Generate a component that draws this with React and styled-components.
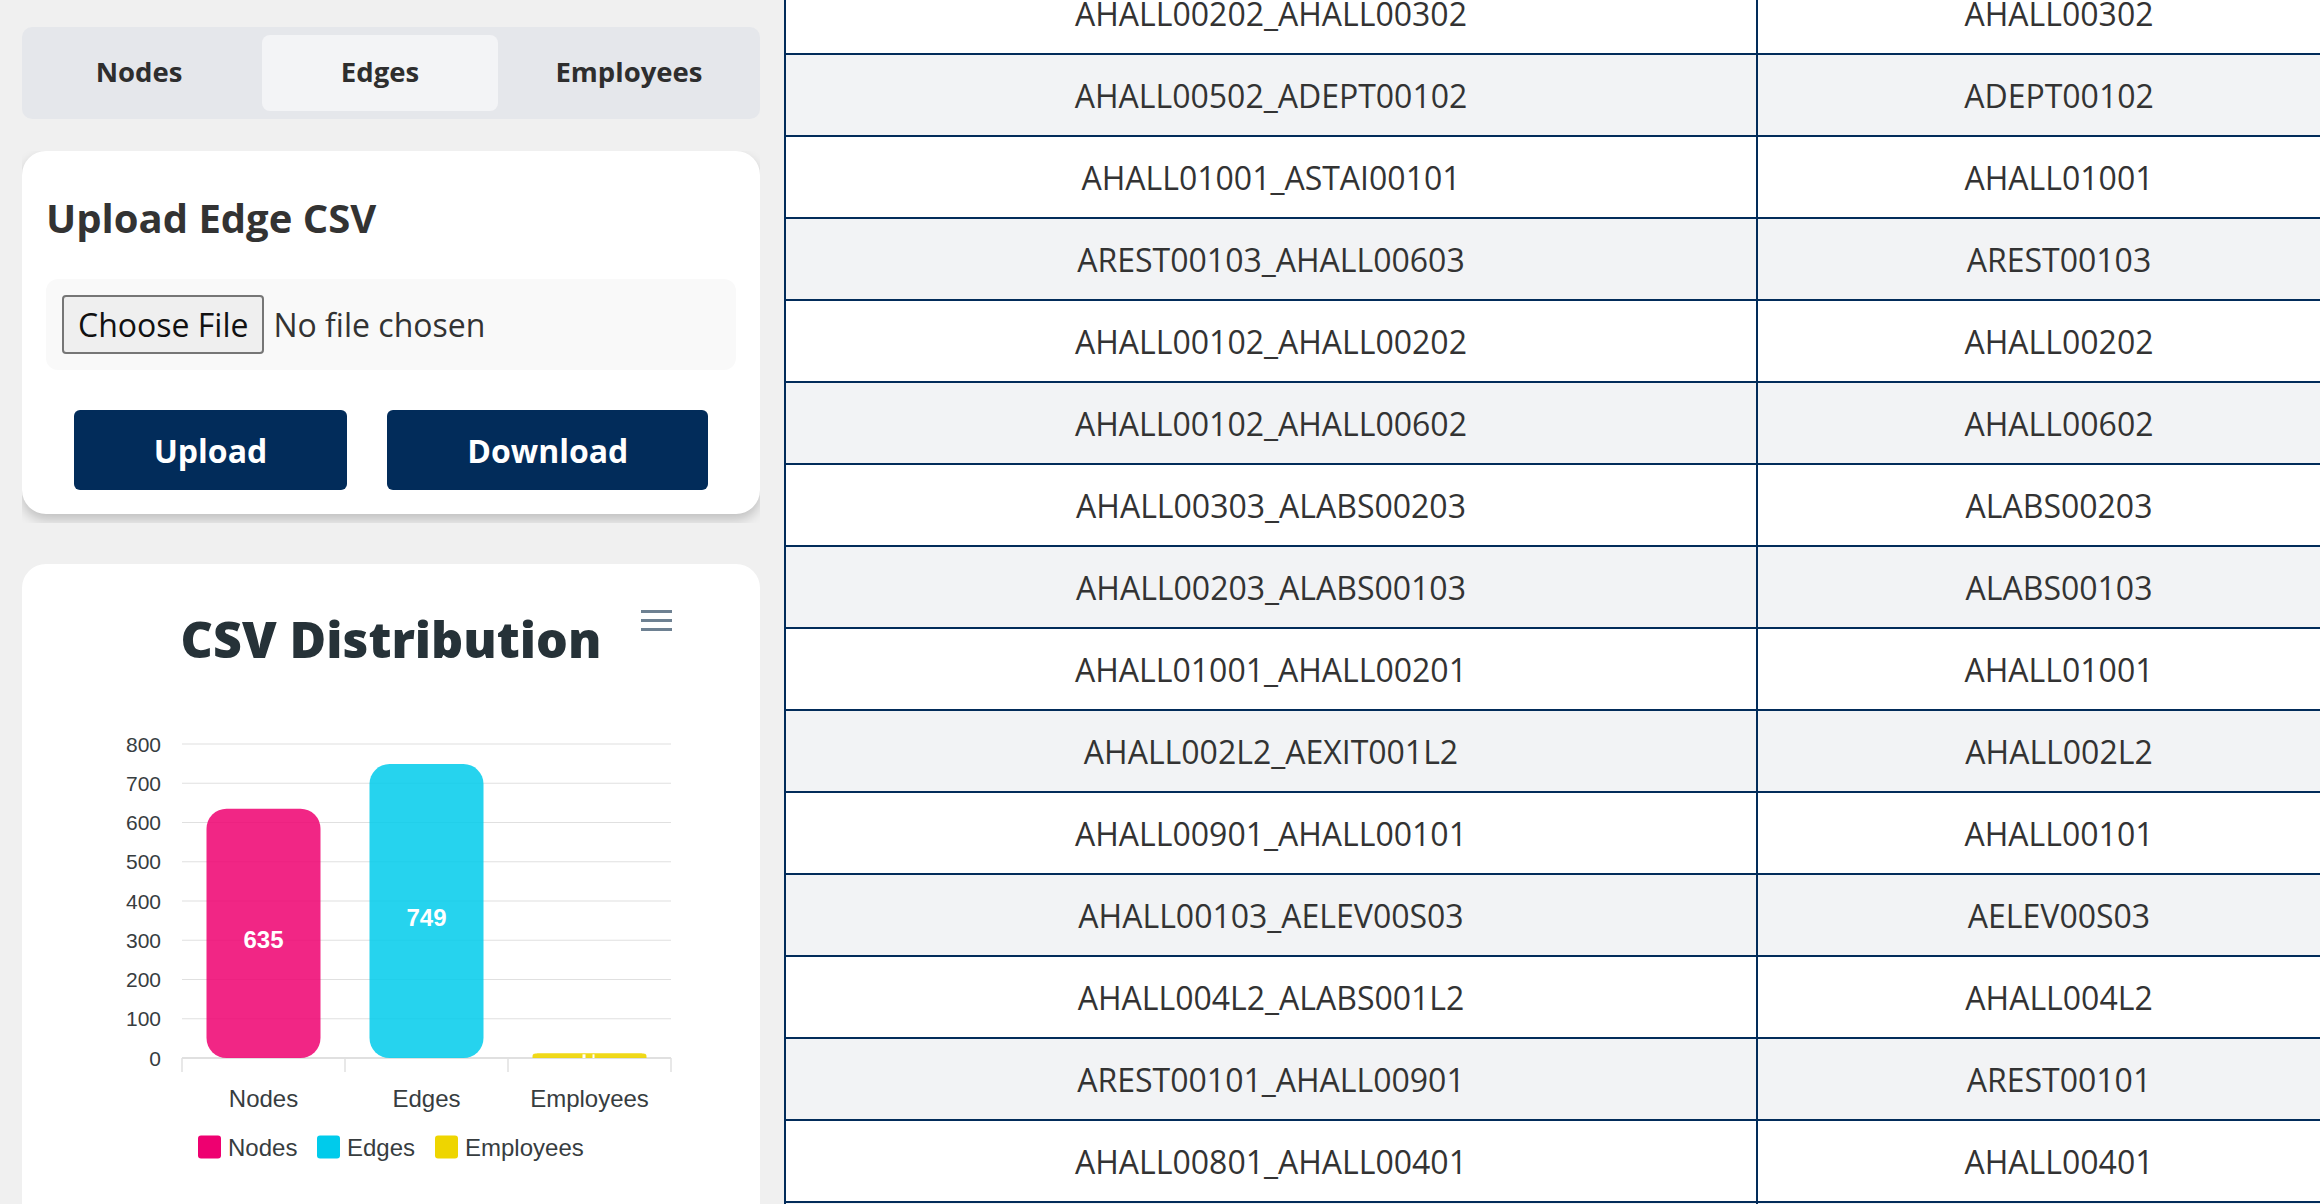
import React, { useLayoutEffect, useRef, useState } from "react";
import styled, { createGlobalStyle } from "styled-components";

const NAVY = "#022c5a";

const GlobalStyle = createGlobalStyle`
  html, body {
    margin: 0;
    padding: 0;
    height: 100%;
    overflow: hidden;
    background: #f0f0f0;
  }
  body {
    font-family: "Open Sans", "Noto Sans", sans-serif;
    color: #333;
  }
  #root { height: 100%; }
  * { box-sizing: border-box; }
`;

const Page = styled.div`
  display: flex;
  gap: 24px;
  height: 100vh;
  padding-left: 22px;
  overflow: hidden;
`;

const LeftColumn = styled.aside`
  flex: 0 0 738px;
  width: 738px;
  padding-top: 27px;
  display: flex;
  flex-direction: column;
  overflow: hidden;
`;

const TabBar = styled.nav`
  flex-shrink: 0;
  display: grid;
  grid-template-columns: 218px 236px 234px;
  gap: 14px;
  height: 92px;
  padding: 8px;
  background: #e5e7eb;
  border-radius: 10px;
`;

const Tab = styled.button`
  border: 0;
  border-radius: 8px;
  background: ${(p) => (p.$active ? "#f3f4f6" : "transparent")};
  font-family: "Open Sans", sans-serif;
  font-weight: 700;
  font-size: 27.5px;
  color: #2e2e2e;
  cursor: pointer;
  padding: 0 0 4px;
`;

const ShadowClip = styled.div`
  flex-shrink: 0;
  margin-top: 32px;
  padding-bottom: 9px;
  overflow: hidden;
`;

const UploadCard = styled.section`
  background: #fff;
  border-radius: 24px;
  padding: 40px 24px 24px;
  box-shadow: 0 6px 12px rgba(0, 0, 0, 0.2);
`;

const CardTitle = styled.h2`
  margin: 0;
  font-family: "Open Sans", sans-serif;
  font-weight: 700;
  font-size: 40px;
  line-height: 54px;
  color: #333;
`;

const FileArea = styled.div`
  margin-top: 34px;
  padding: 16px;
  background: #f9f9f9;
  border-radius: 12px;
`;

const FileInput = styled.input`
  font-family: "Open Sans", sans-serif;
  font-size: 32px;
  color: #333;
  line-height: normal;

  &::file-selector-button {
    font: inherit;
    color: #111;
    background: #efefef;
    border: 2px solid #767676;
    border-radius: 4px;
    padding: 6px 14px;
    margin-right: 9px;
  }
`;

const ButtonRow = styled.div`
  margin-top: 40px;
  display: flex;
  justify-content: center;
  gap: 40px;
`;

const ActionButton = styled.button`
  height: 80px;
  padding: 0 80px;
  border: 0;
  border-radius: 6px;
  background: ${NAVY};
  color: #fff;
  font-family: "Open Sans", sans-serif;
  font-weight: 700;
  font-size: 32px;
  cursor: pointer;
`;

const ChartCard = styled.section`
  flex-shrink: 0;
  margin-top: 41px;
  height: 700px;
  background: #fff;
  border-radius: 24px;
`;

const TablePanel = styled.main`
  flex: 1 1 auto;
  height: 100vh;
  overflow: hidden;
`;

const Table = styled.div`
  width: max-content;
  border-left: 2px solid ${NAVY};
`;

const Row = styled.div`
  display: grid;
  grid-template-columns: 972px 604px;
  height: 82px;
  border-bottom: 2px solid ${NAVY};
  background: ${(p) => (p.$striped ? "#f2f3f5" : "#ffffff")};
`;

const Cell = styled.div`
  display: flex;
  align-items: center;
  justify-content: center;
  border-right: 2px solid ${NAVY};
  font-family: "Open Sans", sans-serif;
  font-size: 32px;
  color: #333;
  white-space: nowrap;
`;

const edges = [
  ["AHALL00202_AHALL00302", "AHALL00302"],
  ["AHALL00502_ADEPT00102", "ADEPT00102"],
  ["AHALL01001_ASTAI00101", "AHALL01001"],
  ["AREST00103_AHALL00603", "AREST00103"],
  ["AHALL00102_AHALL00202", "AHALL00202"],
  ["AHALL00102_AHALL00602", "AHALL00602"],
  ["AHALL00303_ALABS00203", "ALABS00203"],
  ["AHALL00203_ALABS00103", "ALABS00103"],
  ["AHALL01001_AHALL00201", "AHALL01001"],
  ["AHALL002L2_AEXIT001L2", "AHALL002L2"],
  ["AHALL00901_AHALL00101", "AHALL00101"],
  ["AHALL00103_AELEV00S03", "AELEV00S03"],
  ["AHALL004L2_ALABS001L2", "AHALL004L2"],
  ["AREST00101_AHALL00901", "AREST00101"],
  ["AHALL00801_AHALL00401", "AHALL00401"],
  ["AHALL00401_AHALL00501", "AHALL00501"],
  ["AHALL00601_AREST00102", "AREST00102"],
];

const chartData = [
  { name: "Nodes", value: 635, color: "#ee0070" },
  { name: "Edges", value: 749, color: "#00cbeb" },
  { name: "Employees", value: 12, color: "#eed500" },
];

const PLOT_LEFT = 160;
const PLOT_RIGHT = 649;
const BASE_Y = 494;
const STEP = 39.25;
const CAT_W = (PLOT_RIGHT - PLOT_LEFT) / 3;
const BAR_W = 114;
const LABEL_FONT = '"Liberation Sans", Arial, sans-serif';

function DistributionChart() {
  const ticks = [0, 1, 2, 3, 4, 5, 6, 7, 8];
  const legendX = [176, 295, 413];
  return (
    <svg width="738" height="640" viewBox="0 0 738 640">
      <text
        x="369"
        y="94"
        textAnchor="middle"
        fontFamily='"Open Sans", sans-serif'
        fontWeight="800"
        fontSize="50"
        fill="#263238"
      >
        CSV Distribution
      </text>
      <g fill="#6e8192">
        <rect x="619" y="46" width="31" height="3" />
        <rect x="619" y="55" width="31" height="3" />
        <rect x="619" y="64" width="31" height="3" />
      </g>
      {ticks.map((t) => {
        const y = BASE_Y - t * STEP;
        return (
          <g key={t}>
            <line x1={PLOT_LEFT} x2={PLOT_RIGHT} y1={y} y2={y} stroke="#e0e0e0" strokeWidth="1.2" />
            <text x="139" y={y + 7.5} textAnchor="end" fontFamily={LABEL_FONT} fontSize="21" fill="#373d3f">
              {t * 100}
            </text>
          </g>
        );
      })}
      <line x1={PLOT_LEFT} x2={PLOT_RIGHT} y1={BASE_Y} y2={BASE_Y} stroke="#e0e0e0" strokeWidth="2" />
      {[0, 1, 2, 3].map((i) => (
        <line
          key={i}
          x1={PLOT_LEFT + i * CAT_W}
          x2={PLOT_LEFT + i * CAT_W}
          y1={BASE_Y}
          y2={BASE_Y + 14}
          stroke="#e0e0e0"
          strokeWidth="1.5"
        />
      ))}
      {chartData.map((d, i) => {
        const cx = PLOT_LEFT + CAT_W * (i + 0.5);
        const h = (d.value / 100) * STEP;
        const x = cx - BAR_W / 2;
        const top = BASE_Y - h;
        return (
          <g key={d.name}>
            {h > 40 ? (
              <rect x={x} y={top} width={BAR_W} height={h} rx="20" fill={d.color} fillOpacity="0.85" />
            ) : (
              <path
                d={`M${x},${BASE_Y} C${x},${top} ${x},${top} ${x + 12},${top} L${x + BAR_W - 12},${top} C${x + BAR_W},${top} ${x + BAR_W},${top} ${x + BAR_W},${BASE_Y} Z`}
                fill={d.color}
                fillOpacity="0.9"
              />
            )}
            {h > 40 ? (
              <text
                x={cx}
                y={top + h / 2 + 15}
                textAnchor="middle"
                fontFamily={LABEL_FONT}
                fontWeight="700"
                fontSize="24"
                fill="#fff"
              >
                {d.value}
              </text>
            ) : (
              <g fill="#fff">
                <rect x={cx - 7} y={top + 1} width="3" height={h - 1} />
                <rect x={cx + 3} y={top + 1} width="2" height={h - 1} />
              </g>
            )}
            <text
              x={cx}
              y="543"
              textAnchor="middle"
              fontFamily={LABEL_FONT}
              fontSize="24"
              fill="#373d3f"
            >
              {d.name}
            </text>
          </g>
        );
      })}
      {chartData.map((d, i) => (
        <g key={d.name}>
          <rect x={legendX[i]} y="571.5" width="23" height="23" rx="3" fill={d.color} />
          <text x={legendX[i] + 30} y="591.5" fontFamily={LABEL_FONT} fontSize="24" fill="#373d3f">
            {d.name}
          </text>
        </g>
      ))}
    </svg>
  );
}

export default function App() {
  const [tab, setTab] = useState("Edges");
  const panelRef = useRef(null);

  useLayoutEffect(() => {
    if (panelRef.current) panelRef.current.scrollTop = 27;
  }, []);

  return (
    <>
      <GlobalStyle />
      <Page>
        <LeftColumn>
          <TabBar>
            {["Nodes", "Edges", "Employees"].map((t) => (
              <Tab key={t} $active={tab === t} onClick={() => setTab(t)}>
                {t}
              </Tab>
            ))}
          </TabBar>
          <ShadowClip>
            <UploadCard>
              <CardTitle>Upload Edge CSV</CardTitle>
              <FileArea>
                <FileInput type="file" accept=".csv" />
              </FileArea>
              <ButtonRow>
                <ActionButton>Upload</ActionButton>
                <ActionButton>Download</ActionButton>
              </ButtonRow>
            </UploadCard>
          </ShadowClip>
          <ChartCard>
            <DistributionChart />
          </ChartCard>
        </LeftColumn>
        <TablePanel ref={panelRef}>
          <Table>
            {edges.map(([id, node], i) => (
              <Row key={id + i} $striped={i % 2 === 1}>
                <Cell>{id}</Cell>
                <Cell>{node}</Cell>
              </Row>
            ))}
          </Table>
        </TablePanel>
      </Page>
    </>
  );
}
